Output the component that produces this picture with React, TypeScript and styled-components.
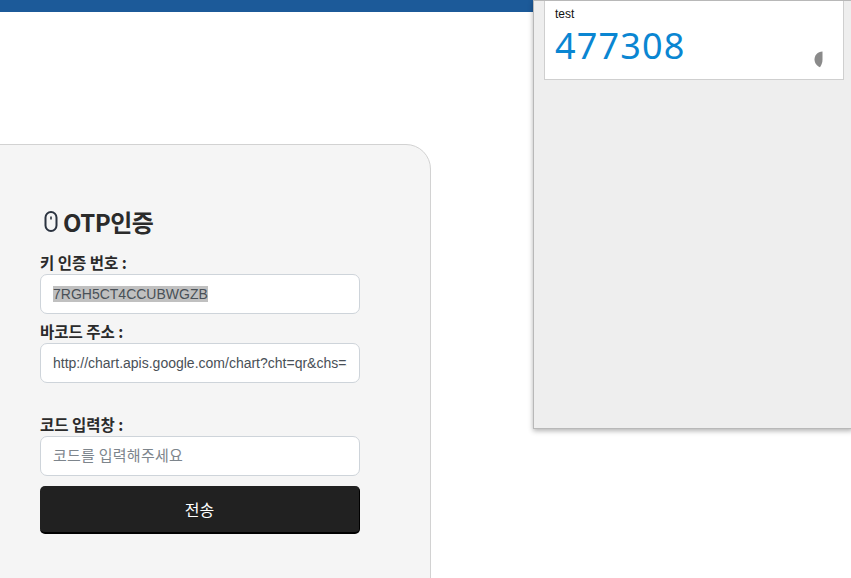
import * as React from "react";
import styled, { createGlobalStyle } from "styled-components";

const GlobalStyle = createGlobalStyle`
html, body {
  margin: 0;
  padding: 0;
  background: #fff;
}
body {
  font-family: "Noto Sans CJK KR", "Liberation Sans", sans-serif;
  color: #212529;
}
* {
  box-sizing: border-box;
}
`;

const Page = styled.div`
  position: relative;
  width: 851px;
  height: 578px;
  overflow: hidden;
`;

const TopBar = styled.header`
  height: 12px;
  background: #1c5a99;
`;

const Panel = styled.main`
  width: 491px;
  height: 480px;
  margin: 132px 0 0 -60px;
  padding: 60px 71px 0 99px;
  background: #f5f5f5;
  border: 1px solid #d2d2d2;
  border-radius: 0 25px 0 0;
`;

const Title = styled.h1`
  display: flex;
  align-items: center;
  gap: 5px;
  height: 32px;
  margin: 0 0 13px;
  padding-left: 4px;
  font-family: "Noto Sans CJK KR", sans-serif;
  font-size: 24px;
  font-weight: 700;
  letter-spacing: -0.5px;
  color: #2b2b2b;
`;

const Label = styled.label`
  display: block;
  height: 24px;
  padding-top: 1px;
  line-height: 22px;
  font-family: "Noto Sans CJK KR", sans-serif;
  font-size: 15.5px;
  font-weight: 700;
  color: #2b2b2b;
  white-space: nowrap;
`;

const Field = styled.input<{ $gap?: number }>`
  display: block;
  width: 320px;
  height: 40px;
  margin-bottom: ${(p) => p.$gap ?? 5}px;
  padding: 0 12px;
  background: #fff;
  border: 1px solid #ced4da;
  border-radius: 7px;
  font-family: "Liberation Sans", sans-serif;
  font-size: 14px;
  color: #495057;
  outline: none;

  &::placeholder {
    font-family: "Noto Sans CJK KR", sans-serif;
    font-size: 15px;
    color: #7d858c;
    letter-spacing: 0.25px;
    opacity: 1;
  }
`;

const SelectedField = styled.div`
  display: flex;
  align-items: center;
  width: 320px;
  height: 40px;
  margin-bottom: 5px;
  padding: 0 12px;
  background: #fff;
  border: 1px solid #ced4da;
  border-radius: 7px;
  font-family: "Liberation Sans", sans-serif;
  font-size: 14px;
  color: #495057;
`;

const Selection = styled.span`
  background: #c0c0c0;
  line-height: 16px;
`;

const SubmitButton = styled.button`
  display: block;
  width: 320px;
  height: 48px;
  margin-top: 10px;
  background: #212121;
  border: 0;
  border-right: 1px solid #000;
  border-bottom: 2px solid #000;
  border-radius: 5px;
  font-family: "Noto Sans CJK KR", sans-serif;
  font-size: 16px;
  color: #fff;
`;

const Popup = styled.aside`
  position: absolute;
  top: 0;
  left: 533px;
  width: 320px;
  height: 429px;
  padding-left: 10px;
  background: #eeeeee;
  border: 1px solid #b8b8b8;
  box-shadow: 0 2px 5px rgba(0, 0, 0, 0.3);
`;

const CodeCard = styled.section`
  position: relative;
  width: 300px;
  height: 79px;
  padding: 6px 10px 0;
  background: #fff;
  border: 1px solid #cfcfcf;
  border-top: 0;
`;

const AccountName = styled.div`
  height: 15px;
  line-height: 15px;
  font-family: "Liberation Sans", sans-serif;
  font-size: 12px;
  color: #111;
`;

const Code = styled.div`
  margin-top: 2px;
  line-height: 44px;
  font-family: "Noto Sans", "Open Sans", sans-serif;
  font-size: 36px;
  letter-spacing: 1.15px;
  color: #0a86d2;
`;

const Countdown = styled.svg`
  position: absolute;
  right: 20px;
  bottom: 11px;
`;

export default function App() {
  return (
    <Page>
      <GlobalStyle />
      <TopBar />
      <Panel>
        <Title>
          <svg width="14" height="21" viewBox="0 0 14 21" fill="none">
            <rect x="1.5" y="1" width="11" height="19" rx="5.5" stroke="#2b3340" strokeWidth="2" />
            <rect x="6.2" y="5.5" width="1.6" height="3" fill="#2b3340" />
          </svg>
          OTP인증
        </Title>
        <Label>키 인증 번호 :</Label>
        <SelectedField>
          <Selection>7RGH5CT4CCUBWGZB</Selection>
        </SelectedField>
        <Label>바코드 주소 :</Label>
        <Field
          $gap={29}
          readOnly
          defaultValue="http://chart.apis.google.com/chart?cht=qr&chs=300x300&chl=otpauth"
        />
        <Label>코드 입력창 :</Label>
        <Field placeholder="코드를 입력해주세요" />
        <SubmitButton type="button">전송</SubmitButton>
      </Panel>
      <Popup>
        <CodeCard>
          <AccountName>test</AccountName>
          <Code>477308</Code>
          <Countdown width="9" height="17" viewBox="0 0 9 17">
            <path d="M8.5 0.5 C3.5 0.8 0.5 4.5 0.5 8.5 C0.5 12 3 15 6 16.2 C7.8 13.5 8.5 11 8.5 8.5 Z" fill="#8a8a8a" />
          </Countdown>
        </CodeCard>
      </Popup>
    </Page>
  );
}
